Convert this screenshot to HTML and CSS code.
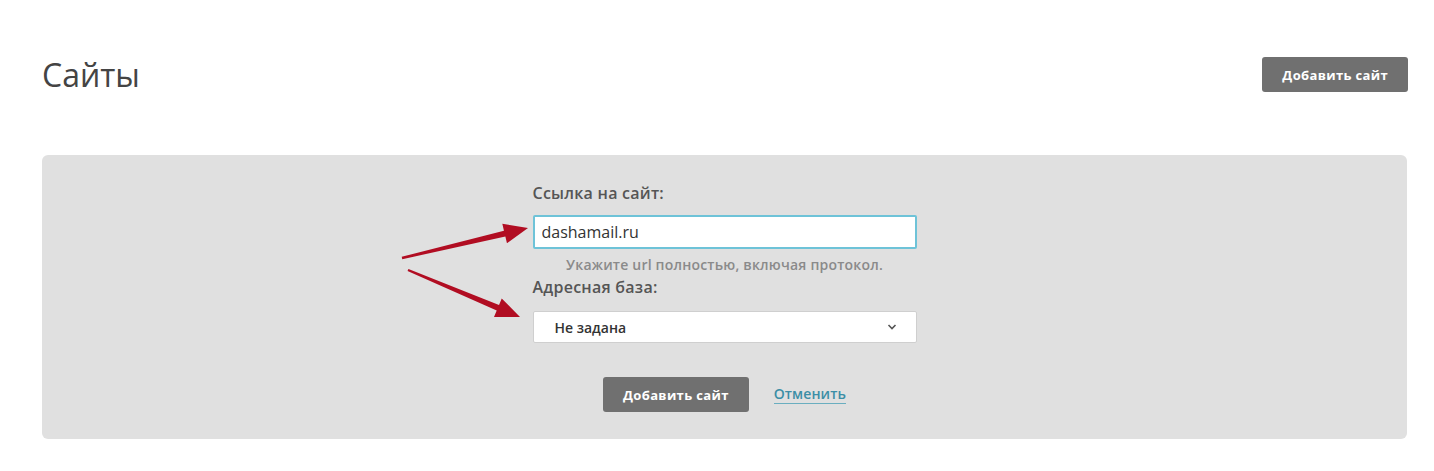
FILE: index.html
```html
<!DOCTYPE html>
<html lang="ru">
<head>
  <meta charset="UTF-8">
  <meta name="viewport" content="width=device-width, initial-scale=1.0">
  <title>Сайты</title>
  <link rel="stylesheet" href="styles.css">
</head>
<body>
  <div class="container">
    <div class="page-header">
      <h1>Сайты</h1>
      <button class="btn">Добавить сайт</button>
    </div>

    <div class="panel">
      <!-- стрелки-указатели на поля формы -->
      <svg class="arrows" width="520" height="200" viewBox="0 0 520 200">
        <polygon points="359.7,101.8 461.95,75.65 460.33,68.84 486,73 464.97,88.3 463.35,81.5 360.3,104.2" />
        <polygon points="366.46,113.89 457.03,149.94 459.74,143.49 478,162 452,161.93 454.71,155.48 365.54,116.11" />
      </svg>

      <form class="site-form">
        <label class="field-label" for="url">Ссылка на сайт:</label>
        <input class="field-input" id="url" type="text" value="dashamail.ru">
        <div class="hint">Укажите url полностью, включая протокол.</div>

        <label class="field-label label-base">Адресная база:</label>
        <div class="select">
          <span>Не задана</span>
          <svg width="10" height="6" viewBox="0 0 10 6">
            <polyline points="1.5,1 5,4.5 8.5,1" fill="none" stroke="#555" stroke-width="1.6" />
          </svg>
        </div>

        <div class="actions">
          <button class="btn" type="button">Добавить сайт</button>
          <a class="link" href="#">Отменить</a>
        </div>
      </form>
    </div>
  </div>
</body>
</html>
```

FILE: styles.css
```css
body {
  margin: 0;
  font-family: "Open Sans", "Noto Sans", sans-serif;
  color: #555;
  background: #fff;
}

.container {
  padding: 57px 26px 0 42px;
}

.page-header {
  display: flex;
  align-items: center;
  justify-content: space-between;
  height: 35px;
  margin-bottom: 63px;
}

h1 {
  margin: 0;
  font-size: 32px;
  font-weight: 400;
  line-height: 35px;
  color: #444;
}

.btn {
  height: 35px;
  padding: 0 20px;
  border: none;
  border-radius: 3px;
  background: #707070;
  color: #fff;
  font-family: inherit;
  font-size: 13px;
  font-weight: 700;
  letter-spacing: 0.35px;
  cursor: pointer;
}

/* серая подложка с формой */
.panel {
  position: relative;
  margin-right: 1px;
  background: #e0e0e0;
  border-radius: 6px;
  padding: 28px 0 27px;
}

.arrows {
  position: absolute;
  left: 0;
  top: 0;
  fill: #b10d22;
}

.site-form {
  width: 384px;
  margin: 0 auto;
  display: flex;
  flex-direction: column;
}

.field-label {
  font-size: 16px;
  font-weight: 600;
  letter-spacing: 0.25px;
  line-height: 20px;
  color: #555;
  margin-bottom: 12px;
}

.label-base {
  margin-top: 3px;
  margin-bottom: 14px;
}

.field-input {
  box-sizing: border-box;
  height: 34px;
  padding: 0 7px;
  border: 2px solid #6ec3d8;
  border-radius: 2px;
  background: #fff;
  font-family: inherit;
  font-size: 16px;
  color: #333;
  outline: none;
}

.hint {
  margin-top: 7px;
  text-align: center;
  font-size: 14px;
  font-weight: 600;
  letter-spacing: 0.2px;
  line-height: 18px;
  color: #8a8a8a;
}

.select {
  box-sizing: border-box;
  height: 32px;
  display: flex;
  align-items: center;
  justify-content: space-between;
  padding: 0 19px 0 21px;
  background: #fff;
  border: 1px solid #cfcfcf;
  border-radius: 2px;
  font-size: 14px;
  font-weight: 600;
  color: #333;
}

.actions {
  margin-top: 34px;
  display: flex;
  align-items: center;
  justify-content: center;
  gap: 25px;
}

.link {
  color: #3c8ea6;
  font-size: 14px;
  font-weight: 600;
  letter-spacing: 0.1px;
  text-decoration: none;
  border-bottom: 1px solid #6aaec0;
  line-height: 18px;
}
```
